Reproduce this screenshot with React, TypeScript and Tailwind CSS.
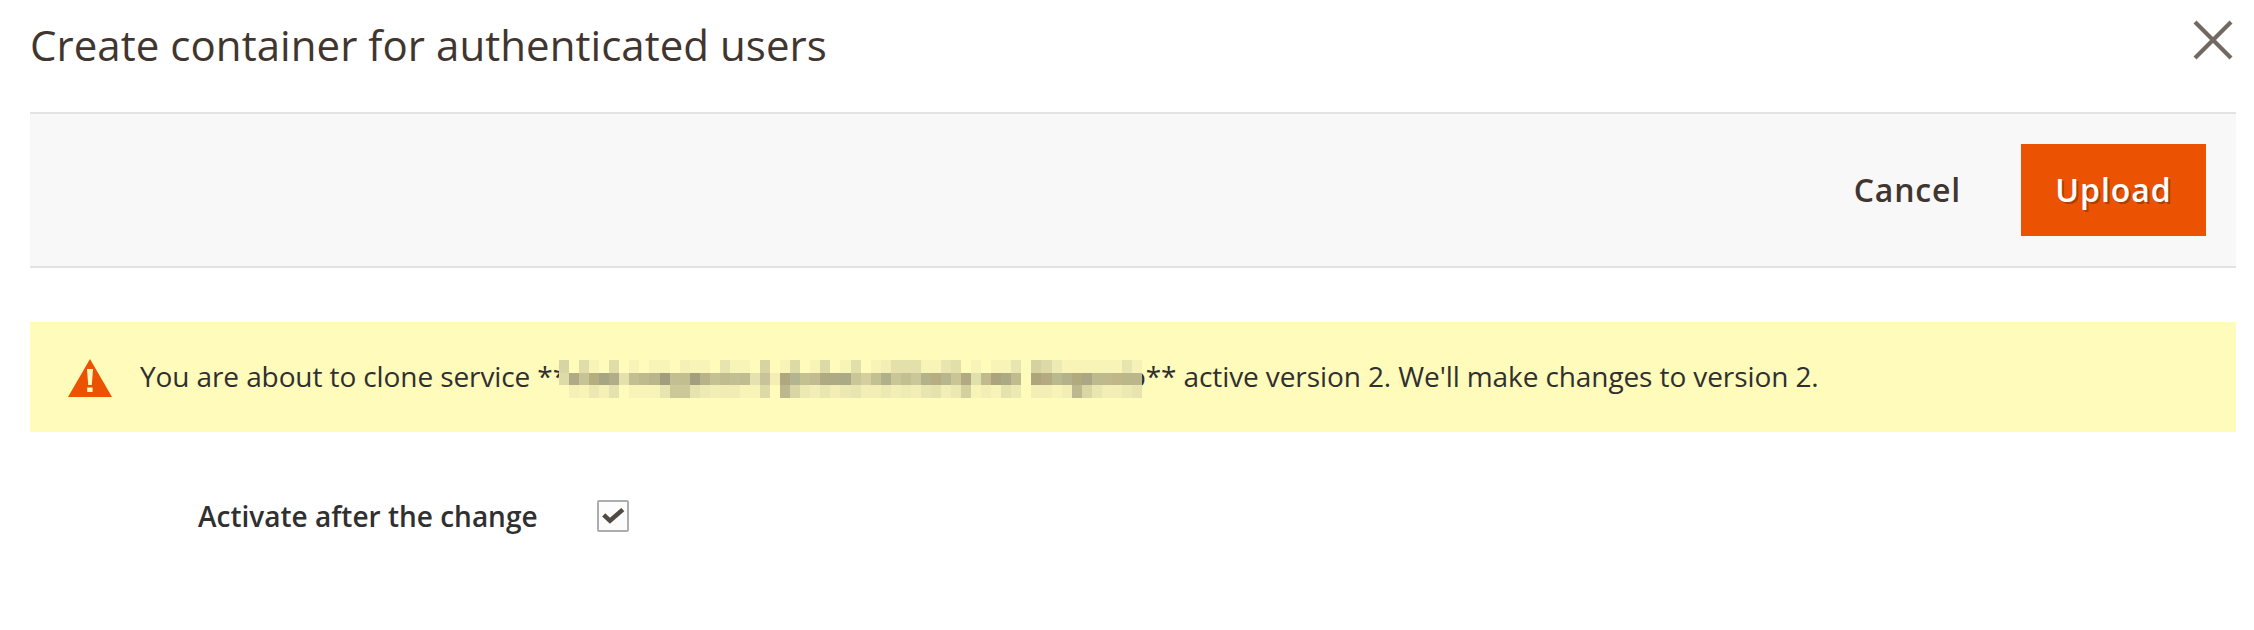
const BG = "fffbbb";
const L = "f8f3b6";
const M = "f3eeb5";

const mosaic: string[][] = [
  [
    "d7d5a3", BG, "e0dda9", L, BG, "e0dda9", BG, L, BG, L, L, BG, "f5f0b5", L, L, BG, "e7e4b0", L, L, BG,
    "d7d4a2", BG, L, "dedaa6", BG, L, "dedaa7", BG, L, "e2dfab", BG, L, M, "e4e0ac", "e4e0ac", "e4e0ac", L, L, "e9e5b0", "e2dfab",
    BG, L, BG, L, L, "e9e5b0", BG, "d5d2a0", "dedaa7", "edeab3", L, L, L, L, L, L, "e9e5b0", "f6f1b6",
  ],
  [
    "dfdba8", "b0ab85", "c6c396", "b7ae80", "a6a584", "b0ad88", "e4e1ad", "c4bf92", "beb98f", "bbb58b",
    "a09e7c", "c4bf92", "c3be8f", "a19f7c", "b8b38b", "c4c194", "c0bc90", "c2bf93", "c0be91", "e6e2b0",
    "c8c398", "f4eeb6", "b0a77c", "b3b591", "c3c092", "c2bc90", "b0aa82", "aeaa84", "acaa86", "cbc698",
    "d4cf9f", "c3c091", "b0b089", "c9c798", "c2bf90", "cac798", "b3b28a", "b8ad80", "b7b68d", "c9c596",
    "b2ab82", "dfe0ab", "c1ba8c", "ada47d", "abaa84", "c0bc90", BG, "aea57d", "b3aa81", "b9b98f",
    "b4b28a", "b2aa7f", "aba683", "bdba8f", "c0b98d", "c1b68a", "bcb68b", "bbb68b",
  ],
  [
    BG, "f5f0b5", L, "ebe8b1", "f5f0b5", "e5e2ae", BG, L, L, L, "e8e4af", "cdc897", "cdc897", "e6e3ae", "eeeab3", M, "f0ecb4", "f0ecb4", L, L,
    "dedaa7", BG, "bdb78d", "d9d6a3", "ece9b2", M, "eae6b0", M, "ebe8b1", "e9e5b0", M, M, "ece9b2", M, "eeebb3", M, "e9e5b0", "e6e2ae", M, "ece8b2",
    "d4d19f", L, M, L, "e5e2ae", "ece9b2", BG, M, M, L, M, "bdb88d", "dbd7a5", "e9e6b0", M, M, "ece9b2", "e7e4af",
  ],
];

function HiddenName() {
  return (
    <svg className="relative z-10 mt-[4px] h-[38px] w-[583px] shrink-0" viewBox="0 0 58 3" preserveAspectRatio="none" shapeRendering="crispEdges">
      {mosaic.map((row, y) => row.map((c, x) => <rect key={`${x}-${y}`} x={x} y={y} width="1" height="1" fill={`#${c}`} />))}
    </svg>
  );
}

export default function App() {
  return (
    <div className="h-[630px] bg-white pl-[30px] pr-[18px] font-['Open_Sans',sans-serif] text-[#303030]">
      <header className="flex h-[112px] justify-between">
        <h1 className="pt-[16px] text-[42px] leading-[57px] tracking-[0.05px] text-[#41362f]">Create container for authenticated users</h1>
        <svg className="mt-[20px] mr-[3px] h-10 w-10" viewBox="0 0 40 40" stroke="#736963" strokeWidth="4.2">
          <path d="M2 2 38 38M38 2 2 38" />
        </svg>
      </header>
      <div className="flex h-[156px] items-center justify-end gap-[60px] border-y-2 border-[#e3e3e3] bg-[#f8f8f8] pr-[30px] text-[32px] font-semibold tracking-[0.8px]">
        <button className="text-[#41362f]">Cancel</button>
        <button className="h-[92px] w-[185px] bg-[#eb5202] tracking-[0.95px] text-white [text-shadow:2px_2px_0_rgba(0,0,0,0.25)]">Upload</button>
      </div>
      <div className="mt-[54px] flex h-[110px] items-center whitespace-nowrap bg-[#fffbbb] pl-[38px] text-[28px] tracking-[-0.1px]">
        <svg className="mt-[2px] mr-[28px] h-[38px] w-[44px]" viewBox="0 0 44 38">
          <path d="M22 0 44 38H0Z" fill="#eb5202" />
          <path d="M19 10h6l-1.2 16h-3.6zM19.2 28.5h5.4v4.5h-5.4z" fill="#fffbbb" />
        </svg>
        <span className="w-[419px] pb-[2px]">You are about to clone service **</span>
        <HiddenName />
        <span className="-ml-[13px] pb-[2px]">o** active version 2. We'll make changes to version 2.</span>
      </div>
      <label className="mt-[63px] flex items-center pl-[168px] text-[28px] font-semibold">
        <span className="w-[399px]">Activate after the change</span>
        <span className="flex h-8 w-8 items-center justify-center rounded-[2px] border-2 border-[#adadad] bg-[#fdfcfc]">
          <svg className="h-7 w-7" viewBox="0 0 28 28" fill="none" stroke="#514943" strokeWidth="4.5">
            <path d="M4.7 12.8 11 18.8 23.8 7.6" />
          </svg>
        </span>
      </label>
    </div>
  );
}
